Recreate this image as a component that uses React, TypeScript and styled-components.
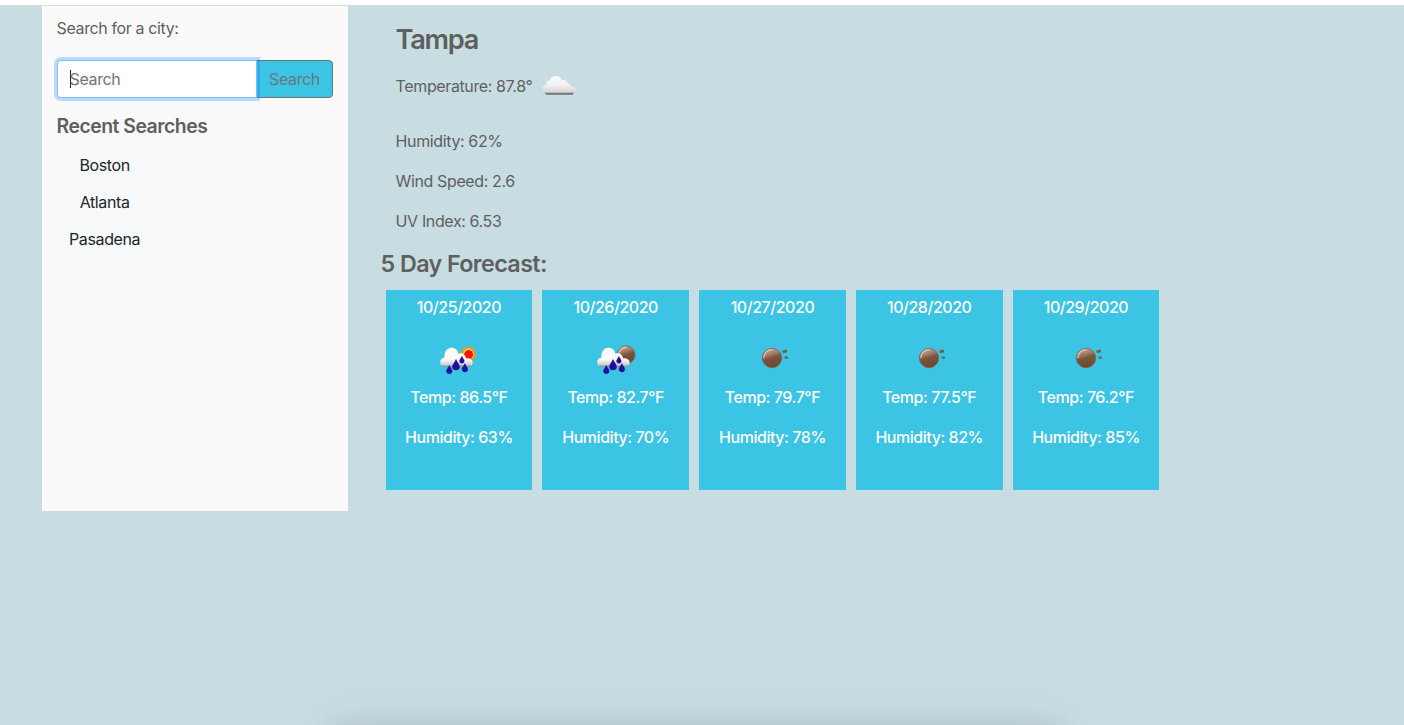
import React from "react";
import styled, { createGlobalStyle } from "styled-components";

const GlobalStyle = createGlobalStyle`
  *, *::before, *::after { box-sizing: border-box; }
  body {
    margin: 0;
    background: #c8dde2;
    color: #5f5f5f;
    font-family: Inter, "Liberation Sans", sans-serif;
    font-size: 16px;
    line-height: 24px;
    letter-spacing: -0.38px;
  }
`;

const Page = styled.div`
  position: relative;
  height: 725px;
  overflow: hidden;
`;

const TopStrip = styled.div`
  height: 6px;
  background: #fff;
  border-bottom: 1px solid #dadcdc;
`;

const Columns = styled.div`
  display: flex;
  align-items: flex-start;
  padding-left: 42px;
`;

const Sidebar = styled.aside`
  width: 306px;
  height: 505px;
  padding: 10px 15px 0 14.6px;
  background: #fafafa;
`;

const Label = styled.p`
  margin: 0 0 20px;
`;

const SearchGroup = styled.form`
  display: flex;
  height: 38px;
  margin-bottom: 16px;
`;

const SearchField = styled.div`
  position: relative;
  z-index: 1;
  display: flex;
  align-items: center;
  width: 200.4px;
  padding-left: 12px;
  border: 1px solid #80bdff;
  border-radius: 4px 0 0 4px;
  background: #fff;
  color: #6c757d;
  box-shadow: 0 0 0 3px rgba(0, 123, 255, 0.25);
`;

const Caret = styled.span`
  width: 1px;
  height: 18px;
  margin-right: -1px;
  background: #222;
`;

const SearchButton = styled.button`
  flex: 1;
  margin-left: -1px;
  padding: 0;
  border: 1px solid #6c757d;
  border-radius: 0 4px 4px 0;
  background: #3bc4e3;
  color: #6c757d;
  font: inherit;
  letter-spacing: inherit;
`;

const Heading = styled.h2<{ $size: number; $line: number; $gap: number; $track: number }>`
  margin: 0 0 ${(p) => p.$gap}px;
  font-size: ${(p) => p.$size}px;
  line-height: ${(p) => p.$line}px;
  font-weight: 600;
  letter-spacing: ${(p) => p.$track}px;
`;

const Recent = styled.div`
  display: flex;
  flex-direction: column;
  width: 96px;
  border-radius: 4px;
  background: #f8f9fb;
`;

const RecentButton = styled.button`
  height: 37px;
  padding: 1px 0 0;
  border: 0;
  background: none;
  color: #212529;
  font: inherit;
  letter-spacing: inherit;
`;

const Main = styled.main`
  margin-left: 32.6px;
  padding-top: 17px;
`;

const Current = styled.section`
  padding-left: 15px;
`;

const Temperature = styled.div`
  display: flex;
  align-items: center;
  gap: 1.4px;
  height: 50px;
  margin-bottom: 18px;
`;

const Reading = styled.p`
  margin: 0 0 16px;
`;

const Cards = styled.div`
  display: flex;
  gap: 10px;
  padding-left: 5px;
`;

const Card = styled.article`
  display: flex;
  flex-direction: column;
  align-items: center;
  width: 146.75px;
  height: 200px;
  padding-top: 5px;
  background: #3bc4e3;
  color: #fff;
  font-weight: 450;
  letter-spacing: -0.46px;
  white-space: nowrap;
`;

const Icon = styled.svg`
  display: block;
  width: 50px;
  height: 50px;
  flex: none;
`;

const BottomShadow = styled.div`
  position: absolute;
  top: 732px;
  left: 334px;
  width: 724px;
  height: 40px;
  box-shadow: 0 0 26px rgba(20, 50, 55, 0.2), 0 0 60px rgba(20, 50, 55, 0.08);
`;

const Defs = () => (
  <defs>
    <linearGradient id="cloud" x1="0" y1="0" x2="0" y2="1">
      <stop offset="0" stopColor="#fff" />
      <stop offset="0.62" stopColor="#fbfbfb" />
      <stop offset="0.88" stopColor="#d0d0d2" />
      <stop offset="1" stopColor="#85898c" />
    </linearGradient>
    <linearGradient id="overcast" x1="0" y1="0" x2="0" y2="1">
      <stop offset="0" stopColor="#fafafa" />
      <stop offset="0.5" stopColor="#f3f3f3" />
      <stop offset="1" stopColor="#d2d2d2" />
    </linearGradient>
    <linearGradient id="moon" x1="0.3" y1="0" x2="0.6" y2="1">
      <stop offset="0" stopColor="#c4a795" />
      <stop offset="0.28" stopColor="#a8836b" />
      <stop offset="0.5" stopColor="#795540" />
      <stop offset="1" stopColor="#70452b" />
    </linearGradient>
  </defs>
);

const Moon = ({ cx, cy, r }: { cx: number; cy: number; r: number }) => (
  <g>
    <circle cx={cx} cy={cy} r={r} fill="url(#moon)" stroke="#80604d" strokeWidth="0.8" />
    <path
      d={`M${cx - r + 1.6} ${cy - 0.5}a${r - 1.6} ${r - 1.6} 0 0 1 ${r - 1.4} ${-(r - 2)}`}
      fill="none"
      stroke="#e3d1c4"
      strokeWidth="1.1"
      strokeLinecap="round"
    />
  </g>
);

const drops = [
  [15.3, 34.6, 1],
  [22, 29.8, 1.25],
  [27.9, 24.8, 0.85],
  [30.9, 32.8, 1],
];

const sunRays = Array.from({ length: 10 }, (_, i) => i * 36);

const RainCloud = () => (
  <g>
    <path
      d="M11 31.8C7.8 31.8 6.2 29.8 6.2 27.2C6.2 24.6 7.8 22.7 10.5 22.4C10.2 16.5 13 12.8 17.4 12.8C21.4 12.8 23.8 15.4 24.3 18.7C28 17.4 31.6 19.7 32 23.4C35.8 23 38.7 24.8 38.7 27.7C38.7 30.3 36.8 31.8 34 31.8Z"
      fill="url(#cloud)"
    />
    {drops.map(([x, y, s]) => (
      <path
        key={x}
        transform={`translate(${x} ${y}) scale(${s})`}
        d="M0-4.2C.8-2 2.8-.4 2.8 1.5A2.8 2.6 0 0 1-2.8 1.5C-2.8-.4-.8-2 0-4.2Z"
        fill="#2a08a4"
        stroke="#170770"
        strokeWidth="0.4"
      />
    ))}
  </g>
);

type Kind = "overcast" | "dayRain" | "nightRain" | "clearNight";

const WeatherIcon = ({ kind }: { kind: Kind }) => (
  <Icon viewBox="0 0 50 50" aria-hidden="true">
    <Defs />
    {kind === "overcast" && (
      <g transform="translate(0 0.7)">
        <path d="M10.6 30H40L38.8 33H12Z" fill="#747477" />
        <path
          d="M12.5 31.1C9.8 31 8.3 29.3 8.3 27.1C8.3 25 10 23.2 12.3 22.9C12.2 20.3 13.8 18.7 15.8 18.8C16.4 16 18.8 14.3 21.7 14.3C24.8 14.3 27 16 27.6 18.6C30.8 17.5 33.8 19.3 34 22.4C35.4 22.2 36.5 23.2 36.7 24.5C39.8 24.2 41.8 25.7 41.8 27.9C41.8 30 40.4 31.1 38.3 31.1Z"
          fill="url(#overcast)"
        />
      </g>
    )}
    {kind === "dayRain" && (
      <g>
        {sunRays.map((a) => (
          <path key={a} transform={`translate(34.3 19.3) rotate(${a})`} d="M-2-5.2L0-9.6L2-5.2Z" fill="#f39a0c" />
        ))}
        <circle cx="34.3" cy="19.3" r="6" fill="#fbab18" />
        <circle cx="34.3" cy="19.3" r="5" fill="#ffdcaa" />
        <circle cx="34.6" cy="19.6" r="4.5" fill="#fd1404" />
        <RainCloud />
      </g>
    )}
    {kind === "nightRain" && (
      <g>
        <Moon cx={35} cy={19.9} r={9} />
        <RainCloud />
      </g>
    )}
    {kind === "clearNight" && (
      <g>
        <Moon cx={25} cy={23} r={9.7} />
        <path d="M35.2 15.6H37.2V14.8H40V17.4H38V18H35.8V16.8H35.2ZM37.4 21.4H40.8V23.8H38.2V23H37.4Z" fill="#7a5a48" />
      </g>
    )}
  </Icon>
);

const recent = ["Boston", "Atlanta", "Pasadena"];

const forecast: { date: string; kind: Kind; temp: string; humidity: string }[] = [
  { date: "10/25/2020", kind: "dayRain", temp: "86.5", humidity: "63" },
  { date: "10/26/2020", kind: "nightRain", temp: "82.7", humidity: "70" },
  { date: "10/27/2020", kind: "clearNight", temp: "79.7", humidity: "78" },
  { date: "10/28/2020", kind: "clearNight", temp: "77.5", humidity: "82" },
  { date: "10/29/2020", kind: "clearNight", temp: "76.2", humidity: "85" },
];

export default function App() {
  return (
    <Page>
      <GlobalStyle />
      <TopStrip />
      <Columns>
        <Sidebar>
          <Label>Search for a city:</Label>
          <SearchGroup>
            <SearchField>
              <Caret />
              Search
            </SearchField>
            <SearchButton type="button">Search</SearchButton>
          </SearchGroup>
          <Heading $size={19.4} $line={24} $gap={8} $track={-0.5}>Recent Searches</Heading>
          <Recent>
            {recent.map((city) => (
              <RecentButton key={city}>{city}</RecentButton>
            ))}
          </Recent>
        </Sidebar>
        <Main>
          <Current>
            <Heading $size={27.2} $line={34} $gap={4} $track={-1.3}>Tampa</Heading>
            <Temperature>
              <span>Temperature: 87.8°</span>
              <WeatherIcon kind="overcast" />
            </Temperature>
            <Reading>Humidity: 62%</Reading>
            <Reading>Wind Speed: 2.6</Reading>
            <Reading>UV Index: 6.53</Reading>
          </Current>
          <Heading $size={23.3} $line={30} $gap={11} $track={-0.6}>5 Day Forecast:</Heading>
          <Cards>
            {forecast.map((day) => (
              <Card key={day.date}>
                <Reading>{day.date}</Reading>
                <WeatherIcon kind={day.kind} />
                <Reading>Temp: {day.temp}°F</Reading>
                <Reading>Humidity: {day.humidity}%</Reading>
              </Card>
            ))}
          </Cards>
        </Main>
      </Columns>
      <BottomShadow />
    </Page>
  );
}
